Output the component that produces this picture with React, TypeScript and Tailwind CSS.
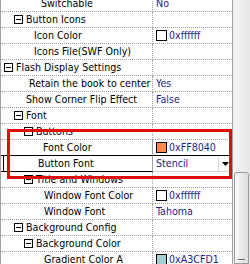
import React from 'react';

type Row = {
  name: string;
  pl: number;
  group?: boolean;
  value?: string;
  swatch?: string;
  selected?: 'above' | 'row';
  combo?: boolean;
};

const rows: Row[] = [
  { name: 'Switchable', pl: 40, value: 'No' },
  { name: 'Button Icons', pl: 13, group: true },
  { name: 'Icon Color', pl: 33, value: '0xffffff', swatch: '#ffffff' },
  { name: 'Icons File(SWF Only)', pl: 33 },
  { name: 'Flash Display Settings', pl: 3, group: true },
  { name: 'Retain the book to center', pl: 28, value: 'Yes' },
  { name: 'Show Corner Flip Effect', pl: 25, value: 'False' },
  { name: 'Font', pl: 13, group: true },
  { name: 'Buttons', pl: 23, group: true },
  { name: 'Font Color', pl: 42, value: '0xFF8040', swatch: '#ff8a4c', selected: 'above' },
  { name: 'Button Font', pl: 37, value: 'Stencil', selected: 'row', combo: true },
  { name: 'Title and Windows', pl: 23, group: true },
  { name: 'Window Font Color', pl: 43, value: '0xffffff', swatch: '#ffffff' },
  { name: 'Window Font', pl: 43, value: 'Tahoma' },
  { name: 'Background Config', pl: 13, group: true },
  { name: 'Background Color', pl: 23, group: true },
  { name: 'Gradient Color A', pl: 43, value: '0xA3CFD1', swatch: '#a3cfd1' },
];

const MinusBox = () => (
  <span className="flex h-[9px] w-[9px] shrink-0 items-center justify-center border border-black bg-white">
    <span className="h-px w-[5px] bg-black" />
  </span>
);

const GridRow: React.FC<{ row: Row }> = ({ row }) => {
  const nameBorder =
    row.selected ? 'border-b border-solid border-black' : 'border-b border-dotted border-[#a0a0a0]';
  const valueBorder =
    row.selected === 'above'
      ? 'border-b border-solid border-black'
      : row.selected === 'row'
        ? 'border-b border-solid border-[#d4d4d4]'
        : 'border-b border-dotted border-[#a0a0a0]';

  return (
    <div className="flex h-[16px] shrink-0">
      <div className={`flex w-[152px] shrink-0 border-r border-r-[#a0a0a0] ${nameBorder}`}>
        {row.selected === 'row' ? (
          <div className="ml-[2px] flex flex-1 items-center border-l border-black" style={{ paddingLeft: row.pl - 3 }}>
            <span className="whitespace-nowrap">{row.name}</span>
          </div>
        ) : (
          <div className="flex flex-1 items-center gap-[3px] overflow-hidden" style={{ paddingLeft: row.pl }}>
            {row.group && <MinusBox />}
            <span className="whitespace-nowrap">{row.name}</span>
          </div>
        )}
      </div>
      <div className={`flex flex-1 items-center overflow-hidden pl-[3px] text-[#1e1e8c] ${valueBorder}`}>
        {row.swatch && (
          <span className="mr-[2px] h-[11px] w-[11px] shrink-0 border border-black" style={{ background: row.swatch }} />
        )}
        {row.value && <span className="flex-1 whitespace-nowrap">{row.value}</span>}
        {row.combo && (
          <span className="mb-[-1px] flex h-[15px] w-[14px] shrink-0 items-center justify-center self-end border-b border-l border-b-black border-l-[#d8d8d8] bg-white">
            <svg width="7" height="4" viewBox="0 0 7 4">
              <path d="M0 0h7L3.5 4z" fill="#000" />
            </svg>
          </span>
        )}
      </div>
    </div>
  );
};

export default function App() {
  return (
    <div className="relative flex h-[264px] w-[250px] overflow-hidden bg-white text-[10.6px] leading-none text-black [font-family:'DejaVu_Sans_Condensed','Liberation_Sans',sans-serif]">
      <div className="mt-[-4px] flex w-[232px] flex-col border-l border-[#a0a0a0]">
        {rows.map((r, i) => (
          <GridRow key={i} row={r} />
        ))}
      </div>
      <div className="flex w-[18px] flex-col border-l border-[#a0a0a0] bg-gradient-to-r from-[#f4f4f4] to-[#e6e6e6]">
        <div className="h-[172px] shrink-0" />
        <div className="mx-[1px] flex flex-1 flex-col items-center justify-end rounded-t-[3px] border border-[#9a9a9a] bg-gradient-to-r from-[#f8f8f8] to-[#dcdcdc] pb-[3px]">
          <span className="h-px w-[7px] bg-[#6a6a6a]" />
        </div>
      </div>
      <div className="pointer-events-none absolute left-[7px] top-[129px] h-[50px] w-[225px] border-[3px] border-[#e30a0a]" />
    </div>
  );
}
